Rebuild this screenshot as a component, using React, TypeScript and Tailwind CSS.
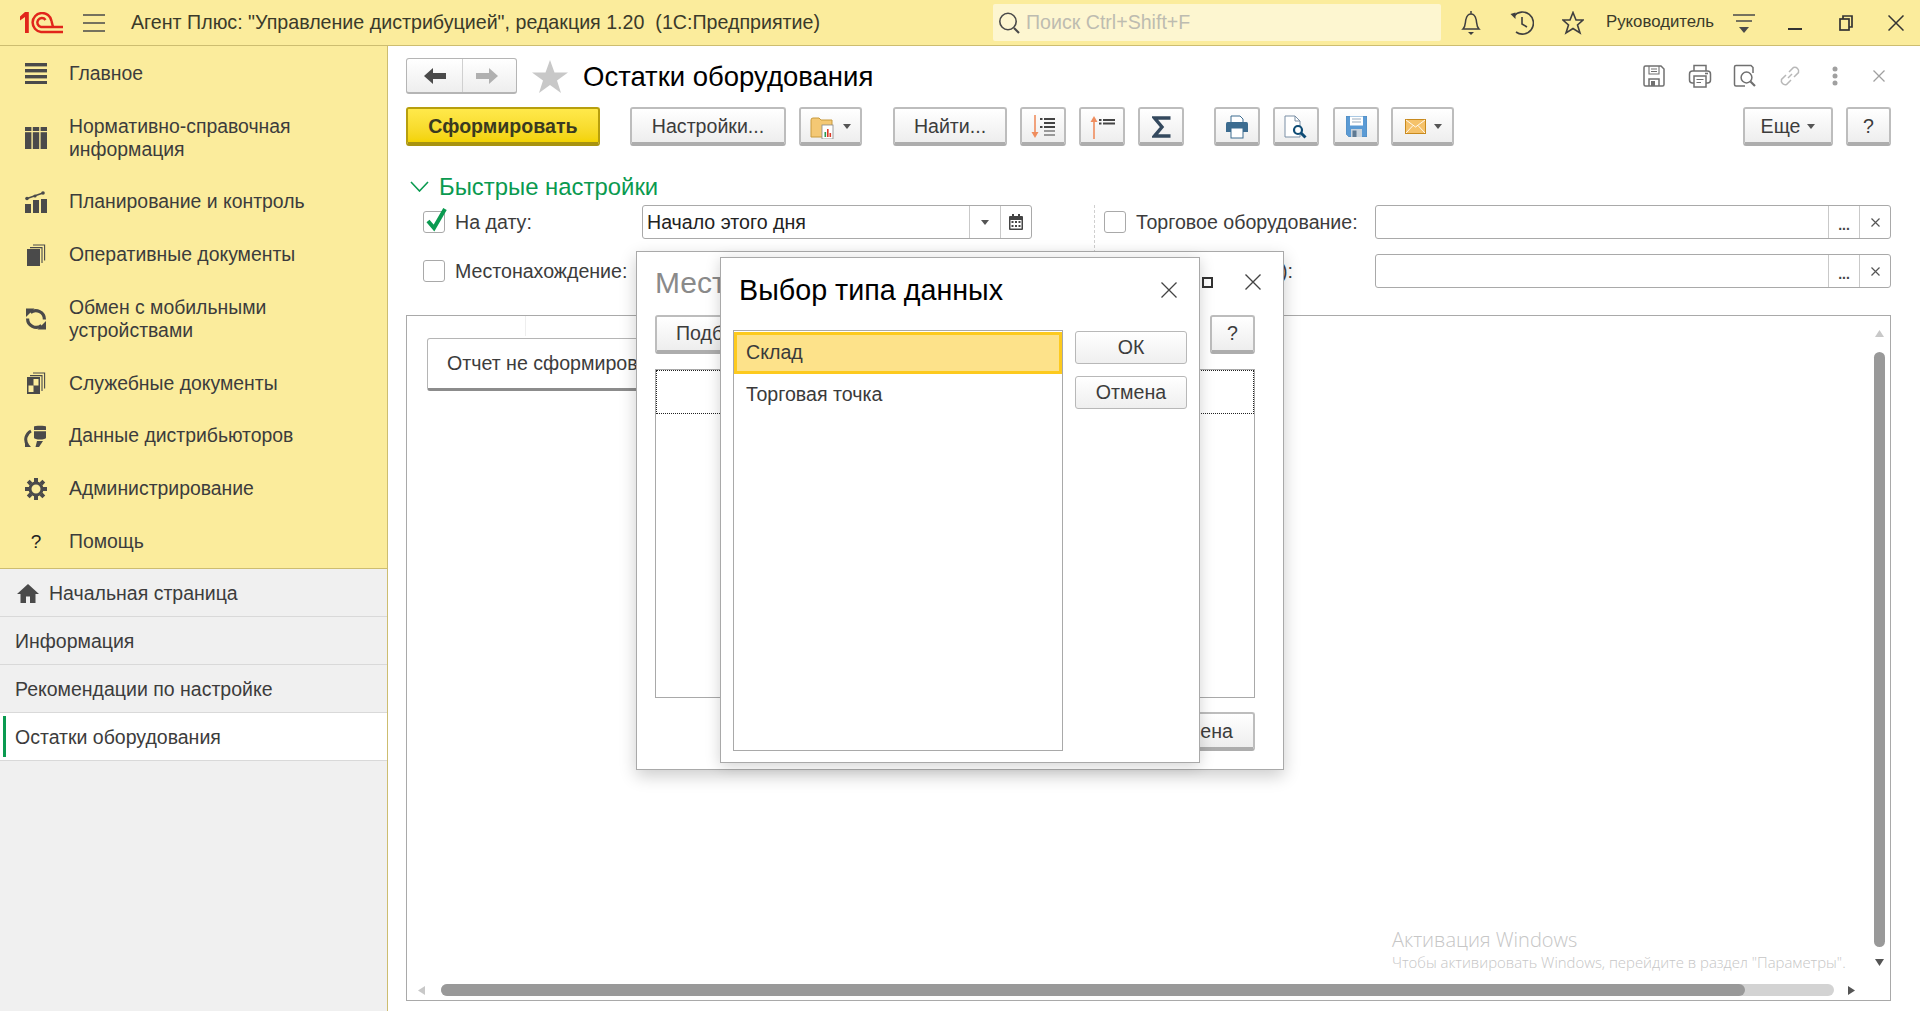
import React from "react";

const FONT = "[font-family:'Liberation_Sans',Arial,sans-serif]";

function Tri({ className = "" }: { className?: string }) {
  return (
    <svg width="8" height="5" viewBox="0 0 8 5" className={className}>
      <path d="M0 0H8L4 5Z" fill="#555" />
    </svg>
  );
}

function Logo() {
  return (
    <svg width="43" height="22" viewBox="0 0 43 22" className="ml-[20px] shrink-0">
      <path d="M0 4.5 5 0H8.8V21H5V5L0 8.5Z" fill="#e1251b" />
      <g stroke="#e1251b" strokeWidth="2.5" fill="none">
        <path d="M43 20H21A9.5 9.5 0 1 1 31.5 9" />
        <path d="M43 15H21A4.5 4.5 0 1 1 25.5 8" />
        <path d="M31.5 9 33 15" />
      </g>
    </svg>
  );
}

const G = "#4a4a4a";

const SideIcons: Record<string, React.ReactNode> = {
  menu: (
    <svg width="22" height="22" viewBox="0 0 22 22" fill={G}>
      <rect y="1" width="22" height="3.4" />
      <rect y="7" width="22" height="3.4" />
      <rect y="13" width="22" height="3.4" />
      <rect y="19" width="22" height="3" />
    </svg>
  ),
  ref: (
    <svg width="22" height="22" viewBox="0 0 22 22" fill={G}>
      <rect y="0" width="6.4" height="22" />
      <rect x="7.8" y="0" width="6.4" height="22" />
      <rect x="15.6" y="0" width="6.4" height="22" />
      <rect y="4" width="22" height="1.2" fill="#fbec9c" />
    </svg>
  ),
  plan: (
    <svg width="22" height="22" viewBox="0 0 22 22" fill={G}>
      <rect x="0" y="13" width="6" height="9" />
      <rect x="8" y="9" width="6" height="13" />
      <rect x="16" y="8" width="6" height="14" />
      <path d="M2 7.5 18 2" stroke={G} strokeWidth="1.5" />
      <circle cx="2" cy="7.5" r="1.8" />
      <circle cx="10" cy="5" r="1.6" />
      <circle cx="18" cy="2" r="1.8" />
    </svg>
  ),
  docs: (
    <svg width="22" height="22" viewBox="0 0 22 22" fill={G}>
      <rect x="2" y="5" width="13" height="17" />
      <path d="M5 3.6H17V19" fill="none" stroke={G} strokeWidth="1.1" />
      <path d="M8 1H19.6V16.5" fill="none" stroke={G} strokeWidth="1.1" />
    </svg>
  ),
  sync: (
    <svg width="22" height="22" viewBox="0 0 22 22" fill="none" stroke={G} strokeWidth="3.2">
      <path d="M5.5 4.5A8.6 8.6 0 0 1 19.4 11.5" />
      <path d="M16.5 17.5A8.6 8.6 0 0 1 2.6 10.5" />
      <path d="M1 0.5H9.5L1 9Z" fill={G} stroke="none" />
      <path d="M21 21.5H12.5L21 13Z" fill={G} stroke="none" />
    </svg>
  ),
  service: (
    <svg width="22" height="22" viewBox="0 0 22 22" fill={G}>
      <rect x="2" y="5" width="13" height="17" />
      <rect x="8.5" y="7" width="5" height="6.5" fill="#fbec9c" />
      <rect x="3.5" y="13.5" width="5" height="6.5" fill="#fbec9c" />
      <path d="M5 3.6H17V19" fill="none" stroke={G} strokeWidth="1.1" />
      <path d="M8 1H19.6V16.5" fill="none" stroke={G} strokeWidth="1.1" />
    </svg>
  ),
  dist: (
    <svg width="24" height="22" viewBox="0 0 24 22" fill={G}>
      <path d="M10 1.5C10 .5 22 .5 22 1.5V5H10Z" />
      <path d="M10 6.2H22V12.5C22 14 19 14.6 16 14.6S10 14 10 12.5Z" />
      <path d="M7 6A9.5 9.5 0 0 0 3.5 20" fill="none" stroke={G} strokeWidth="3" />
      <path d="M1 15 7 22H1Z" />
      <path d="M13 16 11.5 22H15L19 16Z" />
    </svg>
  ),
  gear: (
    <svg width="22" height="22" viewBox="0 0 22 22" fill="none" stroke={G}>
      <circle cx="11" cy="11" r="6" strokeWidth="3" />
      <g strokeWidth="4">
        <path d="M11 0V4M11 18V22M0 11H4M18 11H22M3.2 3.2 6 6M16 16 18.8 18.8M3.2 18.8 6 16M16 6 18.8 3.2" />
      </g>
    </svg>
  ),
  help: <span className="text-[19px] text-[#222] leading-none">?</span>,
};

function SideItem({ icon, lines, h }: { icon: string; lines: string[]; h: string }) {
  return (
    <div className={`flex items-center ${h}`}>
      <div className="ml-[24px] w-[24px] flex justify-center shrink-0">{SideIcons[icon]}</div>
      <div className="ml-[21px] text-[19.4px] leading-[23px] text-[#3c3c3c]">
        {lines.map((l) => (
          <div key={l}>{l}</div>
        ))}
      </div>
    </div>
  );
}

function Tab({ children, active }: { children: React.ReactNode; active?: boolean }) {
  return (
    <div
      className={`h-[48px] flex items-center border-b border-[#d9d9d9] text-[19.5px] text-[#3c3c3c] relative pt-[2px] ${
        active ? "bg-white" : ""
      }`}
    >
      {active && <div className="absolute left-[3px] top-[3px] bottom-[3px] w-[3px] bg-[#0a9a50]" />}
      {children}
    </div>
  );
}

function Btn({
  className = "",
  children,
  primary,
}: {
  className?: string;
  children?: React.ReactNode;
  primary?: boolean;
}) {
  return (
    <div
      className={`h-[39px] flex items-center justify-center rounded-[3px] border-2 border-b-[4px] shrink-0 text-[19.6px] pt-[2px] ${
        primary
          ? "bg-gradient-to-b from-[#ffe94a] to-[#f3d300] border-[#b79f0d] border-b-[#a8930f] font-bold text-[#3a3a20]"
          : "bg-gradient-to-b from-white to-[#eeeeee] border-[#bdbdbd] border-b-[#adadad] text-[#3c3c3c]"
      } ${className}`}
    >
      {children}
    </div>
  );
}

function Checkbox({ checked }: { checked?: boolean }) {
  return (
    <div className="relative w-[22px] h-[22px] rounded-[3px] border border-[#a9a9a9] bg-white shrink-0">
      {checked && (
        <svg width="24" height="26" viewBox="0 0 24 26" className="absolute left-[1px] top-[-6px]">
          <path d="M3 15 9 22 20 3" fill="none" stroke="#0a9a50" strokeWidth="4" />
        </svg>
      )}
    </div>
  );
}

function CalIcon() {
  return (
    <svg width="14" height="16" viewBox="0 0 14 16" fill="#444">
      <rect x="0" y="2" width="14" height="14" rx="1" />
      <rect x="3" y="0" width="2" height="4" />
      <rect x="9" y="0" width="2" height="4" />
      <rect x="1.5" y="6" width="11" height="8.5" fill="#fff" />
      <g>
        <rect x="2.5" y="7" width="2" height="2" />
        <rect x="6" y="7" width="2" height="2" />
        <rect x="9.5" y="7" width="2" height="2" />
        <rect x="2.5" y="11" width="2" height="2" />
        <rect x="6" y="11" width="2" height="2" />
        <rect x="9.5" y="11" width="2" height="2" />
      </g>
    </svg>
  );
}

function X({ size = 16, color = "#444", sw = 1.4 }: { size?: number; color?: string; sw?: number }) {
  return (
    <svg width={size} height={size} viewBox={`0 0 ${size} ${size}`}>
      <path d={`M0.5 0.5 ${size - 0.5} ${size - 0.5}M${size - 0.5} 0.5 0.5 ${size - 0.5}`} stroke={color} strokeWidth={sw} />
    </svg>
  );
}

function ChoiceField() {
  return (
    <div className="flex h-[34px] flex-1 rounded-[3px] border border-[#a9a9a9] bg-white">
      <div className="flex-1" />
      <div className="w-[31px] border-l border-[#c9c9c9] flex items-end justify-center pb-[4px] leading-[18px] text-[#444] font-bold">
        <span className="text-[14px]">...</span>
      </div>
      <div className="w-[31px] border-l border-[#c9c9c9] flex items-center justify-center">
        <X size={9} color="#555" sw={1.2} />
      </div>
    </div>
  );
}

function SmallBtn({ children, className = "" }: { children: React.ReactNode; className?: string }) {
  return (
    <div
      className={`w-[112px] h-[33px] flex items-center justify-center rounded-[3px] border border-[#b8b8b8] bg-gradient-to-b from-white to-[#efefef] text-[19.6px] text-[#3c3c3c] ${className}`}
    >
      {children}
    </div>
  );
}

export default function App() {
  return (
    <div className={`w-[1920px] h-[1011px] overflow-hidden relative bg-white ${FONT}`}>
      {/* Header */}
      <header className="h-[46px] bg-[#fbec9c] border-b border-[#cdbd70] flex items-center">
        <Logo />
        <svg width="22" height="18" viewBox="0 0 22 18" className="ml-[20px] shrink-0" stroke="#4a4a4a" strokeWidth="1.6">
          <path d="M0 1H22M0 9H22M0 17H22" />
        </svg>
        <div className="ml-[26px] w-[862px] text-[19.65px] text-[#3a3a2a] whitespace-pre shrink-0">
          Агент Плюс: "Управление дистрибуцией", редакция 1.20{"  "}(1С:Предприятие)
        </div>
        <div className="w-[448px] h-[37px] bg-[#fdf6d0] rounded-[2px] flex items-center shrink-0">
          <svg width="24" height="24" viewBox="0 0 24 24" className="ml-[4px]" fill="none" stroke="#4a4a4a" strokeWidth="1.6">
            <circle cx="11" cy="10.5" r="8.2" />
            <path d="M17 17 22 22" strokeWidth="2.2" />
          </svg>
          <span className="ml-[5px] pt-[1px] text-[19.6px] text-[#bdbcb0]">Поиск Ctrl+Shift+F</span>
        </div>
        <svg width="20" height="26" viewBox="0 0 20 26" className="ml-[20px] shrink-0" fill="none" stroke="#3f3f3f" strokeWidth="1.5">
          <path d="M10 1V4M2 19C5 16 4 12 5 9 6 5 8 4 10 4S14 5 15 9C16 12 15 16 18 19Z" />
          <path d="M7 22H13L10 25Z" fill="#3f3f3f" stroke="none" />
        </svg>
        <svg width="24" height="26" viewBox="0 0 24 26" className="ml-[29px] shrink-0" fill="none" stroke="#3f3f3f" strokeWidth="1.6">
          <path d="M4 6A11 11 0 1 1 6 22" />
          <path d="M0.5 4 5.5 2.5 5.5 9Z" fill="#3f3f3f" stroke="none" />
          <path d="M12 7V14L17 17" />
        </svg>
        <svg width="22" height="24" viewBox="0 0 22 24" className="ml-[28px] shrink-0" fill="none" stroke="#3f3f3f" strokeWidth="1.6">
          <path d="M11 1.5 14 9H21L15.5 14 18 22 11 17.5 4 22 6.5 14 1 9H8Z" />
        </svg>
        <div className="ml-[22px] mb-[2px] w-[107px] text-[16.8px] text-[#3a3a2a] shrink-0 whitespace-nowrap">Руководитель</div>
        <svg width="22" height="22" viewBox="0 0 22 22" className="ml-[20px] shrink-0" stroke="#4a4a4a" strokeWidth="1.6">
          <path d="M0 3H22M3 9H19" />
          <path d="M6 15H16L11 21Z" fill="#4a4a4a" stroke="none" />
        </svg>
        <div className="ml-[33px] w-[14px] h-[2px] mt-[13px] bg-[#333] shrink-0" />
        <svg width="14" height="16" viewBox="0 0 14 16" className="ml-[37px] shrink-0" fill="none" stroke="#333" strokeWidth="1.7">
          <rect x="1" y="4" width="9" height="11" />
          <path d="M4 4V1H13V12H10" />
        </svg>
        <div className="ml-[35px] shrink-0">
          <X size={16} color="#333" sw={1.5} />
        </div>
      </header>

      <div className="flex h-[965px]">
        {/* Sidebar */}
        <aside className="w-[388px] shrink-0 border-r border-[#cdbd70] bg-[#f0f0f0] flex flex-col">
          <div className="bg-[#fbec9c] border-b border-[#cdbd70] h-[523px]">
            <SideItem icon="menu" lines={["Главное"]} h="h-[54px]" />
            <SideItem icon="ref" lines={["Нормативно-справочная", "информация"]} h="h-[75px]" />
            <SideItem icon="plan" lines={["Планирование и контроль"]} h="h-[53px]" />
            <SideItem icon="docs" lines={["Оперативные документы"]} h="h-[53px]" />
            <SideItem icon="sync" lines={["Обмен с мобильными", "устройствами"]} h="h-[76px]" />
            <SideItem icon="service" lines={["Служебные документы"]} h="h-[52px]" />
            <SideItem icon="dist" lines={["Данные дистрибьюторов"]} h="h-[53px]" />
            <SideItem icon="gear" lines={["Администрирование"]} h="h-[53px]" />
            <SideItem icon="help" lines={["Помощь"]} h="h-[53px]" />
          </div>
          <Tab>
            <svg width="22" height="19" viewBox="0 0 22 19" className="ml-[17px]" fill="#4a4a4a">
              <path d="M11 0 22 10H18.5V19H13V12.5H9V19H3.5V10H0Z" />
            </svg>
            <span className="ml-[10px]">Начальная страница</span>
          </Tab>
          <Tab>
            <span className="ml-[15px]">Информация</span>
          </Tab>
          <Tab>
            <span className="ml-[15px]">Рекомендации по настройке</span>
          </Tab>
          <Tab active>
            <span className="ml-[15px]">Остатки оборудования</span>
          </Tab>
        </aside>

        {/* Main */}
        <main className="flex-1 pl-[18px] pr-[29px] flex flex-col">
          {/* Title row */}
          <div className="mt-[12px] h-[36px] flex items-center">
            <div className="w-[111px] h-[36px] flex rounded-[3px] border border-[#b5b5b5] border-b-2 bg-gradient-to-b from-white to-[#eeeeee]">
              <div className="w-[56px] border-r border-[#d0d0d0] flex items-center justify-center">
                <svg width="22" height="16" viewBox="0 0 22 16" fill="#4a4a4a">
                  <path d="M0 8 9 0V5H22V11H9V16Z" />
                </svg>
              </div>
              <div className="flex-1 flex items-center justify-center pr-[5px]">
                <svg width="22" height="16" viewBox="0 0 22 16" fill="#b0b0b0">
                  <path d="M22 8 13 0V5H0V11H13V16Z" />
                </svg>
              </div>
            </div>
            <svg width="36" height="33" viewBox="0 0 36 33" className="ml-[15px]" fill="#c8c8c8">
              <path d="M18 0 22.5 12.5H36L25 20.5 29 33 18 25 7 33 11 20.5 0 12.5H13.5Z" />
            </svg>
            <div className="ml-[15px] pt-[1px] text-[27.5px] text-black whitespace-nowrap">Остатки оборудования</div>
            <div className="flex-1" />
            <div className="flex items-center">
              <svg width="24" height="22" viewBox="0 0 24 22" fill="none" stroke="#707070" strokeWidth="1.5">
                <path d="M2 2.5Q2 1 3.5 1H19L22 4V19.5Q22 21 20.5 21H3.5Q2 21 2 19.5Z" />
                <path d="M7 1V9H17V1M9 4H15M9 6.5H15" strokeWidth="1.1" />
                <path d="M7 21V14H17V21" />
                <rect x="9" y="16" width="4" height="5" fill="#707070" stroke="none" />
              </svg>
              <svg width="24" height="24" viewBox="0 0 24 24" className="ml-[22px]" fill="none" stroke="#707070" strokeWidth="1.5">
                <path d="M6 7V1.5H18V7" />
                <rect x="1.5" y="7" width="21" height="12" rx="3" />
                <rect x="6" y="12" width="12" height="11" fill="#fff" />
                <path d="M8.5 15.5H15.5M8.5 18.5H13" strokeWidth="1.2" />
                <path d="M17 9.5H20" strokeWidth="1.6" />
              </svg>
              <svg width="24" height="24" viewBox="0 0 24 24" className="ml-[21px]" fill="none" stroke="#707070" strokeWidth="1.5">
                <path d="M12 22H3Q1.5 22 1.5 20.5V3Q1.5 1.5 3 1.5H18L20 3.5V9" />
                <circle cx="13.5" cy="13.5" r="5.4" />
                <path d="M17.5 17.5 22 22" strokeWidth="2.2" />
              </svg>
              <svg width="24" height="24" viewBox="0 0 24 24" className="ml-[21px]" fill="none" stroke="#b8b8b8" strokeWidth="1.5">
                <path d="M10 14 14 10" />
                <path d="M8 11 3.5 15.5A4 4 0 0 0 8.5 20.5L13 16" />
                <path d="M11 8 15.5 3.5A4 4 0 0 1 20.5 8.5L16 13" />
              </svg>
              <svg width="6" height="20" viewBox="0 0 6 20" className="ml-[30px]" fill="#a0a0a0">
                <circle cx="3" cy="3" r="2.5" />
                <circle cx="3" cy="10" r="2.5" />
                <circle cx="3" cy="17" r="2.5" />
              </svg>
              <div className="ml-[35px] mr-[6px]">
                <X size={12} color="#a0a0a0" sw={1.3} />
              </div>
            </div>
          </div>

          {/* Toolbar */}
          <div className="mt-[13px] flex items-center">
            <Btn primary className="w-[194px]">Сформировать</Btn>
            <Btn className="ml-[30px] w-[156px]">Настройки...</Btn>
            <Btn className="ml-[13px] w-[63px] gap-[7px]">
              <svg width="26" height="24" viewBox="0 0 26 24">
                <path d="M1 5Q1 3 3 3H9L11 5H22V22H1Z" fill="#f4c874" stroke="#c89a3c" />
                <rect x="12" y="10" width="11" height="14" fill="#fff" stroke="#888" strokeWidth="0.8" />
                <rect x="14.5" y="17" width="1.6" height="5" fill="#2a9a50" />
                <rect x="17" y="14" width="1.6" height="8" fill="#d93a2a" />
                <rect x="19.5" y="18" width="1.6" height="4" fill="#d93a2a" />
              </svg>
              <Tri />
            </Btn>
            <Btn className="ml-[31px] w-[114px]">Найти...</Btn>
            <Btn className="ml-[13px] w-[46px]">
              <svg width="26" height="24" viewBox="0 0 26 24">
                <path d="M5 0V20" stroke="#ef8d5e" strokeWidth="1.6" />
                <path d="M1.5 17H8.5L5 23Z" fill="#ef8d5e" />
                <g fill="#444">
                  <rect x="10" y="3" width="2.5" height="2" />
                  <rect x="14" y="3" width="11" height="2" />
                  <rect x="14" y="7" width="11" height="2" />
                  <rect x="10" y="11" width="2.5" height="2" />
                  <rect x="14" y="11" width="11" height="2" />
                </g>
                <g fill="#999">
                  <rect x="14" y="15" width="11" height="2" />
                  <rect x="14" y="19" width="11" height="2" />
                </g>
              </svg>
            </Btn>
            <Btn className="ml-[13px] w-[46px]">
              <svg width="26" height="24" viewBox="0 0 26 24">
                <path d="M5 4V24" stroke="#ef8d5e" strokeWidth="1.6" />
                <path d="M1.5 7H8.5L5 1Z" fill="#ef8d5e" />
                <g fill="#444">
                  <rect x="10" y="4" width="2.5" height="2" />
                  <rect x="14" y="4" width="12" height="2" />
                  <rect x="10" y="7.5" width="2.5" height="2" />
                  <rect x="14" y="7.5" width="12" height="2" />
                </g>
              </svg>
            </Btn>
            <Btn className="ml-[13px] w-[46px]">
              <svg width="19" height="22" viewBox="0 0 19 22" fill="none" stroke="#34495e" strokeWidth="3.4">
                <path d="M18.5 2H2.5L10 11 2.5 20H18.5" />
              </svg>
            </Btn>
            <Btn className="ml-[30px] w-[46px]">
              <svg width="24" height="24" viewBox="0 0 24 24">
                <path d="M6 8V1H15L18 4V8" fill="#fff" stroke="#3c6c90" strokeWidth="1" />
                <path d="M2.5 7H21.5Q23 7 23 9V17H1V9Q1 7 2.5 7Z" fill="#3c6c90" />
                <rect x="6" y="13" width="12" height="10" fill="#fff" stroke="#3c6c90" />
              </svg>
            </Btn>
            <Btn className="ml-[13px] w-[46px]">
              <svg width="24" height="24" viewBox="0 0 24 24">
                <path d="M1 1H11L16 6V22H1Z" fill="#fff" stroke="#7a8fa5" strokeWidth="1" />
                <path d="M11 1V6H16" fill="none" stroke="#7a8fa5" />
                <circle cx="14" cy="15" r="4" fill="#fff" stroke="#0f4c75" strokeWidth="2.2" />
                <path d="M17 18 21.5 22.5" stroke="#0f4c75" strokeWidth="3" />
              </svg>
            </Btn>
            <Btn className="ml-[14px] w-[46px]">
              <svg width="21" height="21" viewBox="0 0 21 21">
                <path d="M0 0H21V21H3L0 18Z" fill="#5b9bd5" stroke="#4a7fb0" strokeWidth="0.6" />
                <rect x="4" y="0.5" width="13" height="9" fill="#fff" />
                <path d="M6 3H15M6 6H15" stroke="#9ab" strokeWidth="1" />
                <rect x="5" y="13" width="11" height="8" fill="#c9d3dc" />
                <rect x="6.5" y="14.5" width="4" height="6.5" fill="#5f7a93" />
              </svg>
            </Btn>
            <Btn className="ml-[12px] w-[63px] gap-[8px] pl-[1px]">
              <svg width="21" height="15" viewBox="0 0 21 15">
                <rect x="0.5" y="0.5" width="20" height="14" fill="#f5c26b" stroke="#c88a1e" />
                <path d="M1 1 10.5 8 20 1M1 14 8 6.5M20 14 13 6.5" stroke="#fff" strokeWidth="1" fill="none" opacity="0.9" />
              </svg>
              <Tri />
            </Btn>
            <div className="flex-1" />
            <Btn className="w-[90px] gap-[7px]">
              Еще <Tri />
            </Btn>
            <Btn className="ml-[13px] w-[45px]">?</Btn>
          </div>

          {/* Quick settings */}
          <div className="mt-[28px] pt-[1px] h-[24px] flex items-center text-[23.9px] text-[#0a9a50]">
            <svg width="19" height="11" viewBox="0 0 19 11" className="ml-[4px]" fill="none" stroke="#0a9a50" strokeWidth="1.6">
              <path d="M1 1 9.5 10 18 1" />
            </svg>
            <span className="ml-[10px]">Быстрые настройки</span>
          </div>

          {/* Fields */}
          <div className="mt-[7px] h-[83px] flex">
            <div className="w-[688px] shrink-0 pl-[17px] flex flex-col gap-[15px]">
              <div className="h-[34px] flex items-center text-[19.6px] text-[#3c3c3c]">
                <Checkbox checked />
                <span className="ml-[10px] w-[187px] pt-[1px]">На дату:</span>
                <div className="w-[390px] h-[34px] flex rounded-[3px] border border-[#a9a9a9] bg-white">
                  <div className="flex-1 pl-[4px] pt-[2px] flex items-center text-[#222]">Начало этого дня</div>
                  <div className="w-[31px] border-l border-[#c9c9c9] flex items-center justify-center">
                    <Tri />
                  </div>
                  <div className="w-[31px] border-l border-[#c9c9c9] flex items-center justify-center">
                    <CalIcon />
                  </div>
                </div>
              </div>
              <div className="h-[34px] flex items-center text-[19.6px] text-[#3c3c3c]">
                <Checkbox />
                <span className="ml-[10px] pt-[1px]">Местонахождение:</span>
              </div>
            </div>
            <div className="flex-1 border-l border-dashed border-[#cfcfcf] pl-[9px] flex flex-col gap-[15px]">
              <div className="h-[34px] flex items-center text-[19.6px] text-[#3c3c3c]">
                <Checkbox />
                <span className="ml-[10px] w-[239px] pt-[1px] whitespace-nowrap">Торговое оборудование:</span>
                <ChoiceField />
              </div>
              <div className="h-[34px] flex items-center text-[19.6px] text-[#3c3c3c]">
                <div className="w-[189px] mr-[82px] pt-[1px] text-right whitespace-nowrap">о):</div>
                <ChoiceField />
              </div>
            </div>
          </div>

          {/* Report */}
          <div className="mt-[27px] h-[686px] border border-[#a9a9a9] relative overflow-hidden">
            <div className="absolute left-[118px] top-0 h-[20px] w-px bg-[#eeeeee]" />
            <div className="absolute left-[20px] top-[22px] w-[400px] h-[53px] rounded-[3px] border border-[#b5b5b5] border-b-[3px] border-b-[#8c8c8c] bg-white flex items-center pl-[19px] text-[19.6px] text-[#3c3c3c] whitespace-nowrap">
              Отчет не сформирован
            </div>
            {/* vertical scrollbar */}
            <svg width="9" height="7" viewBox="0 0 9 7" className="absolute right-[6px] top-[14px]">
              <path d="M0 7H9L4.5 0Z" fill="#c8c8c8" />
            </svg>
            <div className="absolute right-[5px] top-[36px] w-[11px] h-[595px] rounded-full bg-[#999999]" />
            <svg width="9" height="7" viewBox="0 0 9 7" className="absolute right-[6px] top-[643px]">
              <path d="M0 0H9L4.5 7Z" fill="#555" />
            </svg>
            {/* horizontal scrollbar */}
            <div className="absolute left-[34px] top-[668px] w-[1393px] h-[12px] rounded-full bg-[#d3d3d3]">
              <div className="w-[1304px] h-[12px] rounded-full bg-[#999999]" />
            </div>
            <svg width="7" height="9" viewBox="0 0 7 9" className="absolute left-[11px] top-[670px]">
              <path d="M7 0V9L0 4.5Z" fill="#c8c8c8" />
            </svg>
            <svg width="7" height="9" viewBox="0 0 7 9" className="absolute left-[1441px] top-[670px]">
              <path d="M0 0V9L7 4.5Z" fill="#555" />
            </svg>
            {/* Windows activation watermark */}
            <div className="absolute left-[985px] top-[611px] font-light text-[#c6c6c6] [font-family:'Open_Sans',sans-serif] whitespace-nowrap">
              <div className="text-[20px] leading-[26px]">Активация Windows</div>
              <div className="text-[14.9px] leading-[20px] mt-[-1px]">Чтобы активировать Windows, перейдите в раздел "Параметры".</div>
            </div>
          </div>
        </main>
      </div>

      {/* Back dialog */}
      <div className="absolute left-[636px] top-[251px] w-[648px] h-[519px] bg-white border border-[#a9a9a9] shadow-[0_6px_16px_rgba(0,0,0,0.2)]">
        <div className="absolute left-[18px] top-[8px] text-[30px] text-[#8a8a8a] whitespace-nowrap">Мест</div>
        <div className="absolute left-[565px] top-[25px] w-[11px] h-[11px] border-2 border-[#333]" />
        <div className="absolute left-[608px] top-[22px]">
          <X size={16} color="#444" sw={1.4} />
        </div>
        <div className="absolute left-[18px] top-[63px] flex items-center justify-start w-[140px] h-[39px] pl-[19px] pt-[1px] rounded-[3px] border-2 border-b-[4px] border-[#bdbdbd] border-b-[#adadad] bg-gradient-to-b from-white to-[#eeeeee] text-[19.6px] text-[#3c3c3c]">
          Подбор
        </div>
        <div className="absolute left-[573px] top-[63px] flex items-center justify-center w-[45px] h-[39px] pt-[1px] rounded-[3px] border-2 border-b-[4px] border-[#bdbdbd] border-b-[#adadad] bg-gradient-to-b from-white to-[#eeeeee] text-[19.6px] text-[#3c3c3c]">
          ?
        </div>
        <div className="absolute left-[18px] top-[117px] w-[600px] h-[329px] border border-[#a9a9a9]">
          <div className="h-[44px] border border-dotted border-[#222]" />
        </div>
        <div className="absolute left-[450px] top-[460px] flex items-center justify-end w-[168px] h-[39px] pr-[20px] pt-[2px] rounded-[3px] border-2 border-b-[4px] border-[#bdbdbd] border-b-[#adadad] bg-gradient-to-b from-white to-[#eeeeee] text-[19.6px] text-[#3c3c3c]">
          Отмена
        </div>
      </div>

      {/* Front dialog */}
      <div className="absolute left-[720px] top-[257px] w-[480px] h-[506px] bg-white border border-[#a9a9a9] shadow-[0_3px_14px_rgba(0,0,0,0.18)]">
        <div className="absolute left-[18px] top-[11px] text-[28.7px] text-black whitespace-nowrap">Выбор типа данных</div>
        <div className="absolute left-[440px] top-[24px]">
          <X size={16} color="#444" sw={1.3} />
        </div>
        <div className="absolute left-[12px] top-[72px] w-[330px] h-[421px] border border-[#a9a9a9] text-[19.6px] text-[#3a3a3a]">
          <div className="h-[42px] mt-[1px] bg-[#fde28a] border-[3px] border-[#fdca1e] flex items-center pl-[9px]">Склад</div>
          <div className="h-[42px] flex items-center pl-[12px]">Торговая точка</div>
        </div>
        <div className="absolute left-[354px] top-[73px] flex flex-col gap-[12px]">
          <SmallBtn>ОК</SmallBtn>
          <SmallBtn>Отмена</SmallBtn>
        </div>
      </div>
    </div>
  );
}
